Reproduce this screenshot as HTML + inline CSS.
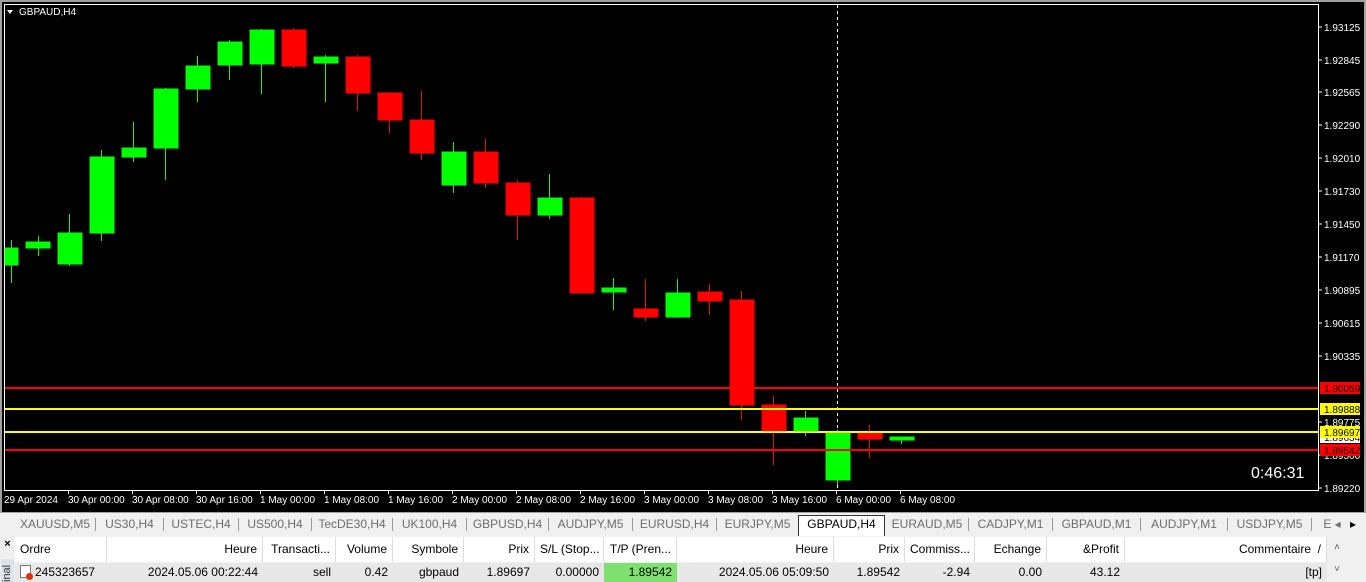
<!DOCTYPE html>
<html><head><meta charset="utf-8"><style>
*{margin:0;padding:0;box-sizing:border-box}
body{width:1366px;height:582px;overflow:hidden;background:#f0f0f0;font-family:"Liberation Sans",sans-serif;position:relative}
.tabs{position:absolute;left:0;top:512px;width:1366px;height:23px;background:#f0f0f0;border-top:1px solid #a0a0a0;font-size:12px;color:#6d6d6d}
.tab{position:absolute;top:3px;height:18px;line-height:17px;text-align:center}
.sep{position:absolute;top:5px;width:1px;height:13px;background:#999}
.sel{background:#fff;border:1px solid #333;border-bottom:none;color:#000;top:2px;height:21px}
.tbl{position:absolute;left:15px;top:537px;width:1332px;height:45px;font-size:12px;color:#000}
.hd,.rw{position:absolute;left:0;height:25px;width:1312px}
.hd{top:0;background:#fff}
.rw{top:26px;height:19px;background:#e8e8e8}
.c{position:absolute;top:0;height:100%;padding:0 5px;line-height:25px;border-right:1px solid #ddd;white-space:nowrap;overflow:hidden}
.rw .c{line-height:19px;border-right:none}
.r{text-align:right}
</style></head><body>
<svg width="1366" height="512" style="position:absolute;left:0;top:0" xmlns="http://www.w3.org/2000/svg" font-family="Liberation Sans" font-size="10">
<rect width="1366" height="512" fill="#000"/>
<rect x="0" y="0" width="1366" height="2" fill="#a0a0a0"/>
<rect x="0" y="0" width="2" height="512" fill="#a0a0a0"/>
<rect x="1364" y="0" width="2" height="512" fill="#a0a0a0"/>
<path d="M4.5 490V4.5H1318.5V490.5H4" stroke="#fff" fill="none"/>
<polygon points="7,10 13,10 10,14" fill="#fff"/>
<text x="19" y="15" fill="#fff">GBPAUD,H4</text>
<line x1="837.5" y1="5" x2="837.5" y2="490" stroke="#fff" stroke-dasharray="3,3"/>
<g stroke-width="1">
<g stroke="#00ff00" fill="#00ff00">
<line x1="11.5" y1="240" x2="11.5" y2="283"/><rect x="5" y="248" width="13" height="17"/>
<line x1="38.5" y1="236" x2="38.5" y2="256"/><rect x="26" y="242" width="24" height="6"/>
<line x1="69.5" y1="214" x2="69.5" y2="266"/><rect x="58" y="233" width="24" height="31"/>
<line x1="101.5" y1="150" x2="101.5" y2="241"/><rect x="90" y="157" width="24" height="76"/>
<line x1="133.5" y1="122" x2="133.5" y2="162"/><rect x="122" y="148" width="24" height="9"/>
<line x1="165.5" y1="88" x2="165.5" y2="180"/><rect x="154" y="89" width="24" height="59"/>
<line x1="197.5" y1="56" x2="197.5" y2="102"/><rect x="186" y="66" width="24" height="23"/>
<line x1="229.5" y1="40" x2="229.5" y2="80"/><rect x="218" y="42" width="24" height="23"/>
<line x1="261.5" y1="29" x2="261.5" y2="94"/><rect x="250" y="30" width="24" height="34"/>
<line x1="325.5" y1="55" x2="325.5" y2="102"/><rect x="314" y="57" width="24" height="6"/>
<line x1="453.5" y1="142" x2="453.5" y2="193"/><rect x="442" y="152" width="24" height="33"/>
<line x1="549.5" y1="174" x2="549.5" y2="219"/><rect x="538" y="198" width="24" height="17"/>
<line x1="613.5" y1="278" x2="613.5" y2="310"/><rect x="602" y="288" width="24" height="4"/>
<line x1="677.5" y1="279" x2="677.5" y2="318"/><rect x="666" y="293" width="24" height="24"/>
<line x1="805.5" y1="411" x2="805.5" y2="436"/><rect x="794" y="418" width="24" height="13"/>
<line x1="837.5" y1="430" x2="837.5" y2="485"/><rect x="826" y="433" width="24" height="47"/>
<line x1="901.5" y1="437" x2="901.5" y2="444"/><rect x="890" y="437" width="24" height="3"/>
</g>
<g stroke="#ff0000" fill="#ff0000">
<line x1="293.5" y1="28" x2="293.5" y2="68"/><rect x="282" y="30" width="24" height="36"/>
<line x1="357.5" y1="55" x2="357.5" y2="111"/><rect x="346" y="57" width="24" height="36"/>
<line x1="389.5" y1="92" x2="389.5" y2="133"/><rect x="378" y="93" width="24" height="27"/>
<line x1="421.5" y1="91" x2="421.5" y2="160"/><rect x="410" y="120" width="24" height="33"/>
<line x1="485.5" y1="139" x2="485.5" y2="188"/><rect x="474" y="152" width="24" height="31"/>
<line x1="517.5" y1="180" x2="517.5" y2="240"/><rect x="506" y="183" width="24" height="32"/>
<line x1="581.5" y1="197" x2="581.5" y2="293"/><rect x="570" y="198" width="24" height="95"/>
<line x1="645.5" y1="279" x2="645.5" y2="321"/><rect x="634" y="309" width="24" height="8"/>
<line x1="709.5" y1="284" x2="709.5" y2="315"/><rect x="698" y="292" width="24" height="9"/>
<line x1="741.5" y1="291" x2="741.5" y2="420"/><rect x="730" y="300" width="24" height="105"/>
<line x1="773.5" y1="396" x2="773.5" y2="465"/><rect x="762" y="405" width="24" height="26"/>
<line x1="869.5" y1="425" x2="869.5" y2="458"/><rect x="858" y="433" width="24" height="6"/>
</g>
</g>
<g stroke-width="2">
<line x1="5" y1="388" x2="1318" y2="388" stroke="#ff0000"/>
<line x1="5" y1="409" x2="1318" y2="409" stroke="#ffff00"/>
<line x1="5" y1="432" x2="1318" y2="432" stroke="#ffff00"/>
<line x1="5" y1="450" x2="1318" y2="450" stroke="#ff0000"/>
</g>
<g fill="#fff">
<text x="1324" y="31">1.93125</text><text x="1324" y="64">1.92845</text><text x="1324" y="96">1.92565</text>
<text x="1324" y="129">1.92290</text><text x="1324" y="162">1.92010</text><text x="1324" y="195">1.91730</text>
<text x="1324" y="228">1.91450</text><text x="1324" y="261">1.91170</text><text x="1324" y="294">1.90895</text>
<text x="1324" y="327">1.90615</text><text x="1324" y="360">1.90335</text><text x="1324" y="426">1.89775</text>
<text x="1324" y="459">1.89500</text><text x="1324" y="492">1.89220</text>
</g>
<g stroke="#fff"><line x1="1318" y1="27" x2="1322" y2="27"/><line x1="1318" y1="60" x2="1322" y2="60"/><line x1="1318" y1="92" x2="1322" y2="92"/><line x1="1318" y1="125" x2="1322" y2="125"/><line x1="1318" y1="158" x2="1322" y2="158"/><line x1="1318" y1="191" x2="1322" y2="191"/><line x1="1318" y1="224" x2="1322" y2="224"/><line x1="1318" y1="257" x2="1322" y2="257"/><line x1="1318" y1="290" x2="1322" y2="290"/><line x1="1318" y1="323" x2="1322" y2="323"/><line x1="1318" y1="356" x2="1322" y2="356"/><line x1="1318" y1="422" x2="1322" y2="422"/><line x1="1318" y1="455" x2="1322" y2="455"/><line x1="1318" y1="488" x2="1322" y2="488"/></g>
<rect x="1320" y="433" width="40" height="10" fill="#fff"/><text x="1324" y="441" fill="#000">1.89634</text>
<rect x="1320" y="382" width="40" height="12" fill="#ff0000"/><text x="1324" y="392" fill="#000">1.90059</text>
<rect x="1320" y="403" width="40" height="12" fill="#ffff00"/><text x="1324" y="413" fill="#000">1.89888</text>
<rect x="1320" y="426" width="40" height="12" fill="#ffff00"/><text x="1324" y="436" fill="#000">1.89697</text>
<rect x="1320" y="444" width="40" height="12" fill="#ff0000"/><text x="1324" y="454" fill="#000">1.89542</text>
<text x="1251" y="478" fill="#fff" font-size="16">0:46:31</text>
<g fill="#fff"><text x="4" y="503">29 Apr 2024</text><text x="68" y="503">30 Apr 00:00</text><text x="132" y="503">30 Apr 08:00</text><text x="196" y="503">30 Apr 16:00</text><text x="260" y="503">1 May 00:00</text><text x="324" y="503">1 May 08:00</text><text x="388" y="503">1 May 16:00</text><text x="452" y="503">2 May 00:00</text><text x="516" y="503">2 May 08:00</text><text x="580" y="503">2 May 16:00</text><text x="644" y="503">3 May 00:00</text><text x="708" y="503">3 May 08:00</text><text x="772" y="503">3 May 16:00</text><text x="836" y="503">6 May 00:00</text><text x="900" y="503">6 May 08:00</text></g>
<g stroke="#fff"><line x1="68.5" y1="490" x2="68.5" y2="494"/><line x1="132.5" y1="490" x2="132.5" y2="494"/><line x1="196.5" y1="490" x2="196.5" y2="494"/><line x1="260.5" y1="490" x2="260.5" y2="494"/><line x1="324.5" y1="490" x2="324.5" y2="494"/><line x1="388.5" y1="490" x2="388.5" y2="494"/><line x1="452.5" y1="490" x2="452.5" y2="494"/><line x1="516.5" y1="490" x2="516.5" y2="494"/><line x1="580.5" y1="490" x2="580.5" y2="494"/><line x1="644.5" y1="490" x2="644.5" y2="494"/><line x1="708.5" y1="490" x2="708.5" y2="494"/><line x1="772.5" y1="490" x2="772.5" y2="494"/><line x1="836.5" y1="490" x2="836.5" y2="494"/><line x1="900.5" y1="490" x2="900.5" y2="494"/></g>
</svg>
<div class="tabs">
<div class="tab" style="left:15px;width:80px">XAUUSD,M5</div><div class="sep" style="left:95px"></div>
<div class="tab" style="left:96px;width:67px">US30,H4</div><div class="sep" style="left:163px"></div>
<div class="tab" style="left:164px;width:74px">USTEC,H4</div><div class="sep" style="left:238px"></div>
<div class="tab" style="left:239px;width:72px">US500,H4</div><div class="sep" style="left:311px"></div>
<div class="tab" style="left:312px;width:80px">TecDE30,H4</div><div class="sep" style="left:392px"></div>
<div class="tab" style="left:393px;width:73px">UK100,H4</div><div class="sep" style="left:466px"></div>
<div class="tab" style="left:467px;width:81px">GBPUSD,H4</div><div class="sep" style="left:548px"></div>
<div class="tab" style="left:549px;width:83px">AUDJPY,M5</div><div class="sep" style="left:632px"></div>
<div class="tab" style="left:633px;width:83px">EURUSD,H4</div><div class="sep" style="left:716px"></div>
<div class="tab" style="left:717px;width:81px">EURJPY,M5</div>
<div class="tab sel" style="left:798px;width:87px">GBPAUD,H4</div>
<div class="tab" style="left:886px;width:82px">EURAUD,M5</div><div class="sep" style="left:968px"></div>
<div class="tab" style="left:969px;width:83px">CADJPY,M1</div><div class="sep" style="left:1052px"></div>
<div class="tab" style="left:1053px;width:87px">GBPAUD,M1</div><div class="sep" style="left:1140px"></div>
<div class="tab" style="left:1141px;width:86px">AUDJPY,M1</div><div class="sep" style="left:1227px"></div>
<div class="tab" style="left:1228px;width:83px">USDJPY,M5</div><div class="sep" style="left:1311px"></div>
<div class="tab" style="left:1322px;width:20px">E ◂</div><div class="tab" style="left:1346px;width:14px;color:#000">▸</div>
</div>
<div style="position:absolute;left:0;top:537px;width:15px;height:45px;background:#f0f0f0">
<div style="font-size:11px;font-weight:bold;text-align:center;line-height:14px">×</div>
<div style="position:absolute;left:1px;top:22px;width:13px;height:23px;background:#dbe4ee;font-size:11px;color:#333;writing-mode:vertical-rl;transform:rotate(180deg);line-height:13px">inal</div>
</div>
<div class="tbl">
<div class="hd">
<div class="c" style="left:0;width:92px">Ordre</div>
<div class="c r" style="left:92px;width:156px">Heure</div>
<div class="c r" style="left:248px;width:73px">Transacti...</div>
<div class="c r" style="left:321px;width:57px">Volume</div>
<div class="c r" style="left:378px;width:71px">Symbole</div>
<div class="c r" style="left:449px;width:71px">Prix</div>
<div class="c r" style="left:520px;width:69px">S/L (Stop...</div>
<div class="c r" style="left:589px;width:73px">T/P (Pren...</div>
<div class="c r" style="left:662px;width:157px">Heure</div>
<div class="c r" style="left:819px;width:71px">Prix</div>
<div class="c r" style="left:890px;width:70px">Commiss...</div>
<div class="c r" style="left:960px;width:72px">Echange</div>
<div class="c r" style="left:1032px;width:78px">&amp;Profit</div>
<div class="c r" style="left:1110px;width:202px">Commentaire &nbsp;/</div>
</div>
<div class="rw">
<div class="c" style="left:0;width:92px"><span style="display:inline-block;width:11px;height:13px;border:1px solid #777;background:#fff;vertical-align:-2px;position:relative;margin-right:4px"><span style="position:absolute;right:-3px;bottom:-3px;width:7px;height:7px;border-radius:50%;background:#e03010"></span></span>245323657</div>
<div class="c r" style="left:92px;width:156px">2024.05.06 00:22:44</div>
<div class="c r" style="left:248px;width:73px">sell</div>
<div class="c r" style="left:321px;width:57px">0.42</div>
<div class="c r" style="left:378px;width:71px">gbpaud</div>
<div class="c r" style="left:449px;width:71px">1.89697</div>
<div class="c r" style="left:520px;width:69px">0.00000</div>
<div class="c r" style="left:589px;width:73px;background:#7ee06e">1.89542</div>
<div class="c r" style="left:662px;width:157px">2024.05.06 05:09:50</div>
<div class="c r" style="left:819px;width:71px">1.89542</div>
<div class="c r" style="left:890px;width:70px">-2.94</div>
<div class="c r" style="left:960px;width:72px">0.00</div>
<div class="c r" style="left:1032px;width:78px">43.12</div>
<div class="c r" style="left:1110px;width:202px">[tp]</div>
</div>
<div style="position:absolute;left:1312px;top:0;width:20px;height:45px;background:#f0f0f0;font-size:10px;color:#555;text-align:center;line-height:22px">˄<br>˅</div>
</div>
</body></html>
